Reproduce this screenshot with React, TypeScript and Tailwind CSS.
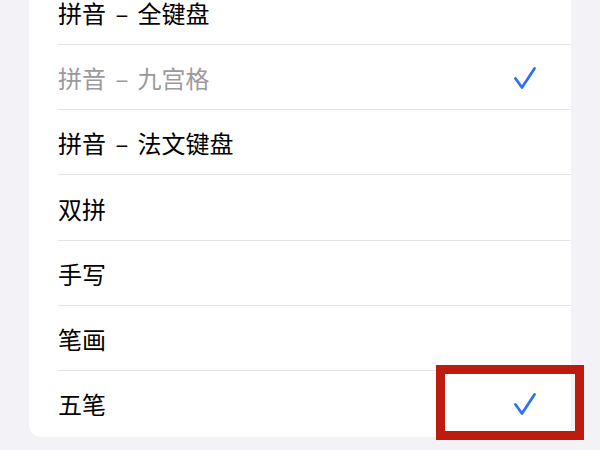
const rows = [
  { label: "拼音 – 全键盘", dim: false, checked: false },
  { label: "拼音 – 九宫格", dim: true, checked: true },
  { label: "拼音 – 法文键盘", dim: false, checked: false },
  { label: "双拼", dim: false, checked: false },
  { label: "手写", dim: false, checked: false },
  { label: "笔画", dim: false, checked: false },
  { label: "五笔", dim: false, checked: true },
]

function CheckMark() {
  return (
    <svg width="24" height="24" viewBox="0 0 24 24" fill="none">
      <path
        d="M2.5 12.5 L9 21.5 L21.5 2.5"
        stroke="#2f72f0"
        strokeWidth="2.8"
        strokeLinecap="round"
        strokeLinejoin="round"
      />
    </svg>
  )
}

export default function App() {
  return (
    <div
      className="relative w-[600px] h-[450px] overflow-hidden bg-[#f2f2f7]"
      style={{ fontFamily: '"Noto Sans CJK SC", "Noto Sans", sans-serif' }}
    >
      <div className="mx-[29px] -mt-[20.5px] pb-px bg-white rounded-[12px] overflow-hidden">
        {rows.map((row, i) => (
          <div key={i} className="pl-[29px]">
            <div className="flex items-center h-[64.3px] pr-[34px] pt-[2px]">
              <span
                className={`flex-1 text-[24px] leading-none [word-spacing:4px] ${
                  row.dim ? "text-[#9a9a9e]" : "text-black"
                }`}
              >
                {row.label}
              </span>
              {row.checked && <CheckMark />}
            </div>
            {i < rows.length - 1 && <div className="h-px bg-[#e3e3e8]" />}
          </div>
        ))}
      </div>

      {/* highlight box */}
      <div className="absolute left-[436px] top-[365px] w-[148px] h-[75px] border-[9px] border-[#bd1a10]" />
    </div>
  )
}
